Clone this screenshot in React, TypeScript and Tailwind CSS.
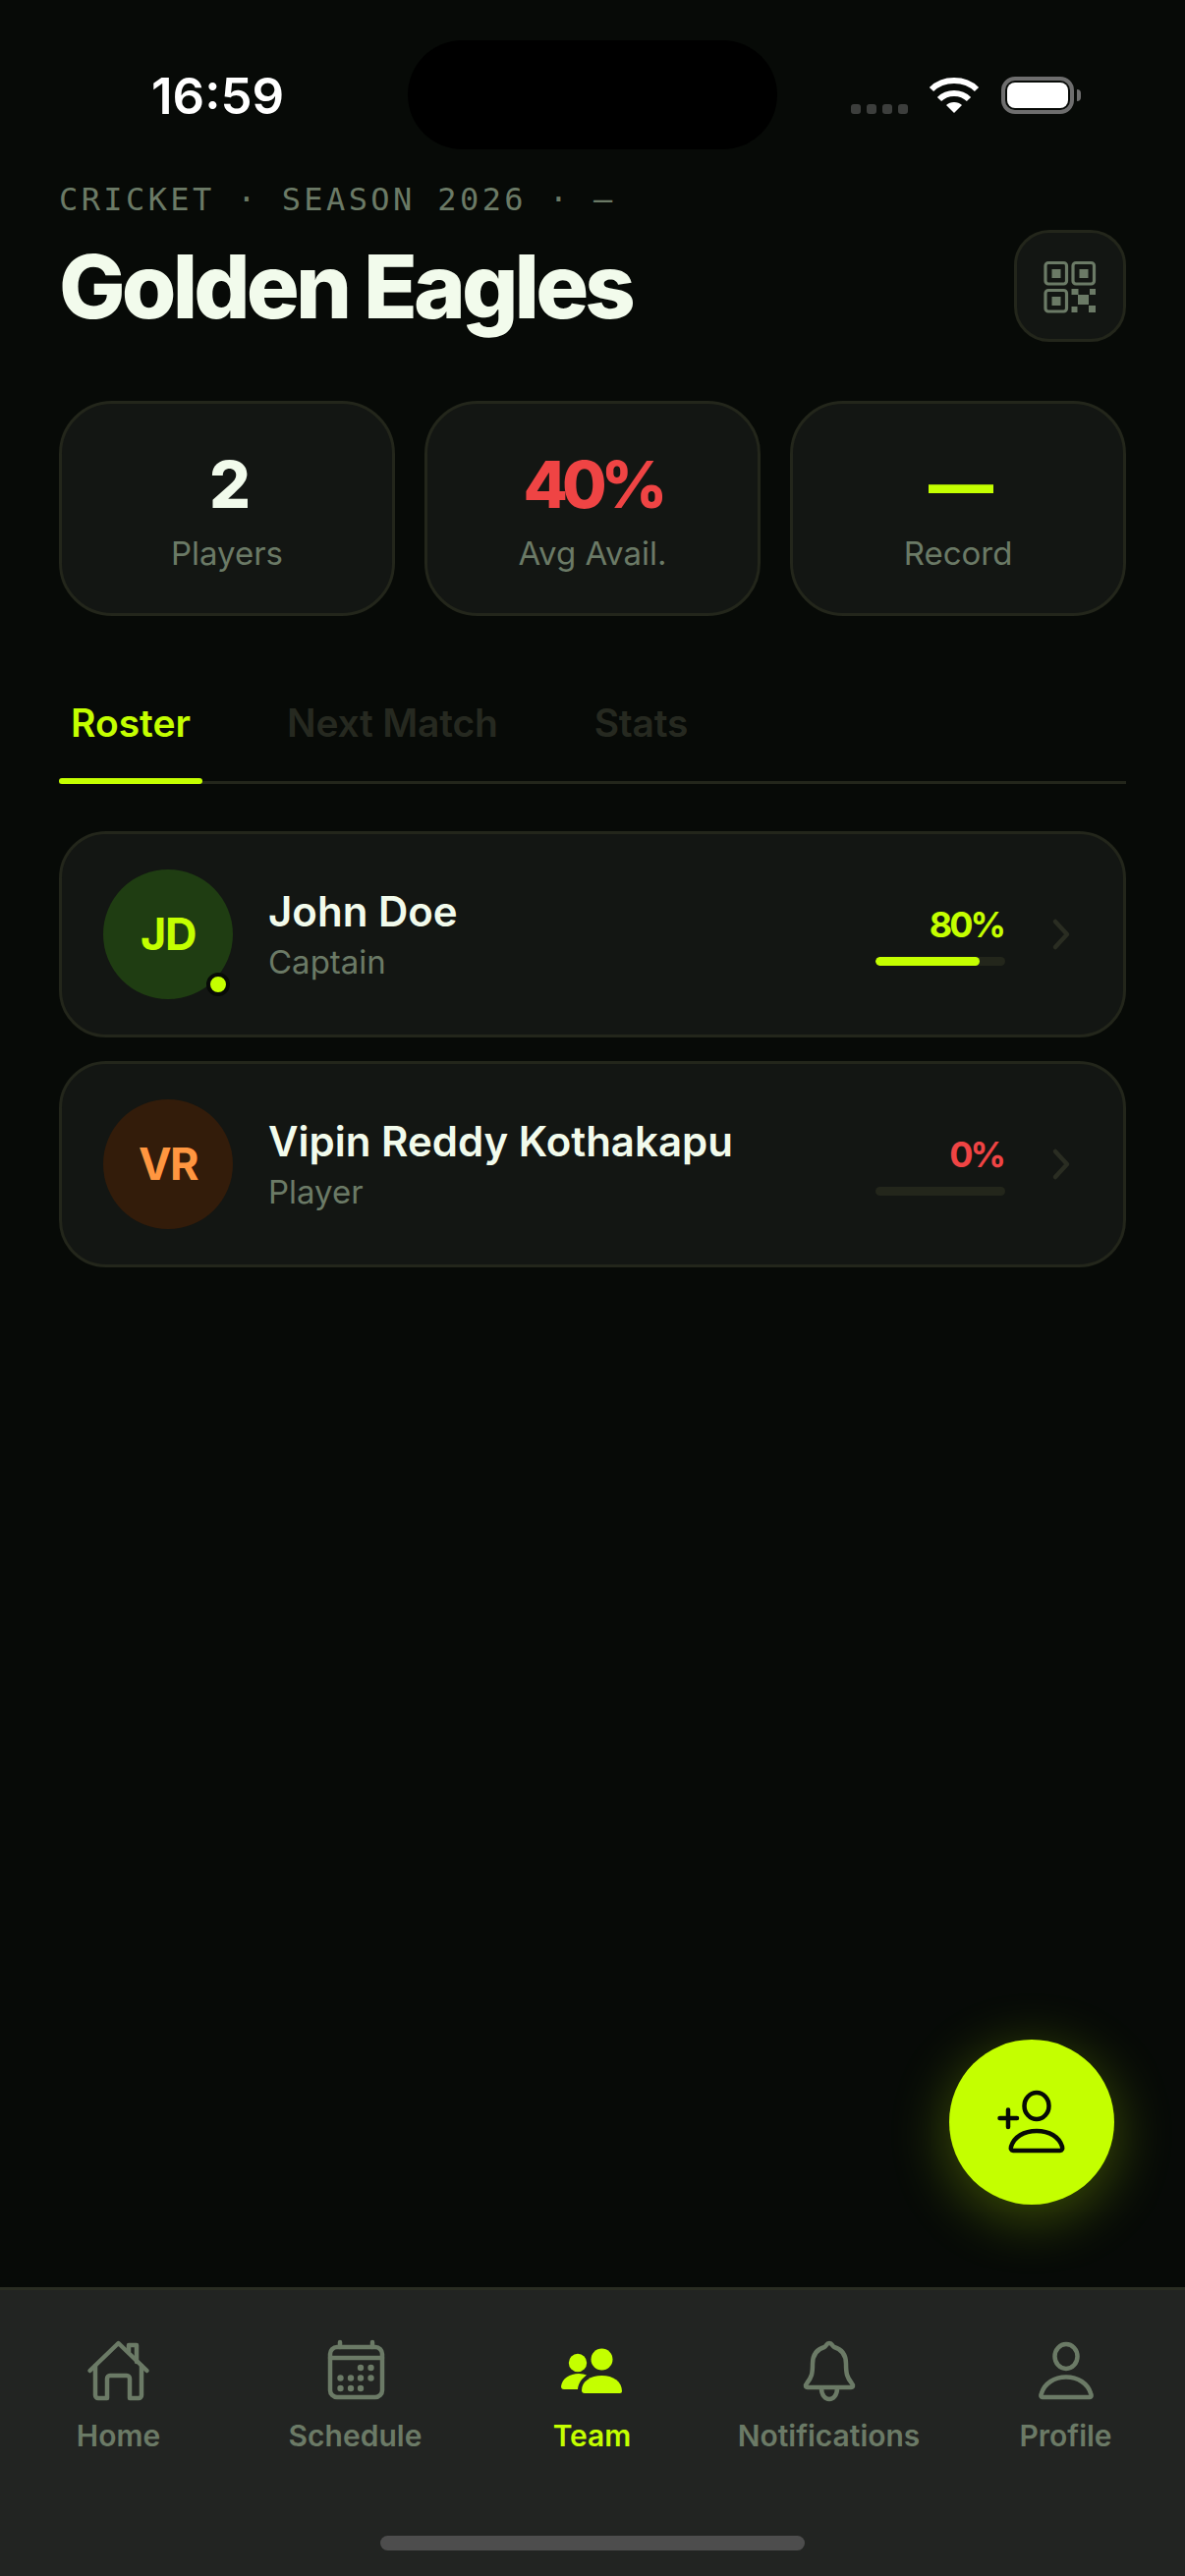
import React from "react";

const LIME = "#c4ff00";

function Stat({ value, label, color }: { value: string; label: string; color: string }) {
  return (
    <div className="flex h-[219px] flex-1 flex-col items-center rounded-[54px] border-[3px] border-[#23261b] bg-[#131613] pt-[42px]">
      <div className="text-[66px] leading-[80px] font-extrabold tracking-[-6px]" style={{ color }}>{value}</div>
      <div className="mt-[8px] text-[33px] leading-[44px] font-normal text-[#6b7a66]">{label}</div>
    </div>
  );
}

function Chevron() {
  return (
    <svg width="24" height="36" viewBox="0 0 24 36" fill="none" className="ml-[45px] shrink-0">
      <path d="M6 5 L18 18 L6 31" stroke="#2a2d22" strokeWidth="4.5" strokeLinecap="round" strokeLinejoin="round" />
    </svg>
  );
}

function Player({ initials, name, role, pct, pctColor, avBg, avFg, dot }: { initials: string; name: string; role: string; pct: number; pctColor: string; avBg: string; avFg: string; dot?: boolean }) {
  return (
    <div className="flex h-[210px] items-center rounded-[48px] border-[3px] border-[#23261b] bg-[#131613] pr-[51px] pl-[42px]">
      <div className="relative flex h-[132px] w-[132px] shrink-0 items-center justify-center rounded-full text-[45px] font-bold tracking-[-1.5px]" style={{ background: avBg, color: avFg }}>
        {initials}
        {dot && <span className="absolute right-[3px] bottom-[3px] h-[24px] w-[24px] rounded-full border-[4px] border-[#070a07] bg-[#c4ff00]" />}
      </div>
      <div className="ml-[36px] flex min-w-0 flex-1 flex-col">
        <div className="text-[42px] leading-[52px] font-semibold text-[#f2fbec]">{name}</div>
        <div className="mt-[3px] text-[33px] leading-[44px] text-[#6b7a66]">{role}</div>
      </div>
      <div className="flex w-[132px] shrink-0 flex-col items-end">
        <div className="pr-[2px] text-[36px] leading-[44px] font-bold tracking-[-3px]" style={{ color: pctColor }}>{pct}%</div>
        <div className="mt-[11px] h-[9px] w-full overflow-hidden rounded-full bg-[#23261b]">
          <div className="h-full rounded-full bg-[#c4ff00]" style={{ width: `${pct}%` }} />
        </div>
      </div>
      <Chevron />
    </div>
  );
}

const G = "#6b7a66";

function HomeIcon() {
  return (
    <svg width="66" height="66" viewBox="0 0 66 66" fill="none" stroke={G} strokeWidth="4.5" strokeLinecap="round" strokeLinejoin="round">
      <path d="M3.5 33 L32.5 5 L61.5 33" />
      <path d="M9 28 V58 a3 3 0 0 0 3 3 H21 V41 a3 3 0 0 1 3 -3 H41 a3 3 0 0 1 3 3 V61 H53 a3 3 0 0 0 3 -3 V28" />
      <path d="M43 14 V7 H51 V24" />
    </svg>
  );
}

function ScheduleIcon() {
  const dots: [number, number][] = [[38, 30], [48.5, 30], [17.5, 40.5], [28, 40.5], [38, 40.5], [48.5, 40.5], [17.5, 51], [28, 51], [38, 51]];
  return (
    <svg width="66" height="66" viewBox="0 0 66 66" fill="none" stroke={G} strokeWidth="4.5" strokeLinecap="round">
      <rect x="7" y="9" width="53" height="51" rx="7" />
      <path d="M7 20 H60" />
      <path d="M17 4 V9 M50 4 V9" />
      {dots.map(([x, y]) => (
        <circle key={`${x}-${y}`} cx={x} cy={y} r="3.2" fill={G} stroke="none" />
      ))}
    </svg>
  );
}

function TeamIcon() {
  return (
    <svg width="66" height="66" viewBox="0 0 66 66" fill={LIME}>
      <circle cx="42.5" cy="21.5" r="11" />
      <circle cx="18" cy="25" r="9.2" />
      <path d="M22 53 C22 44 31 38 42.5 38 C54 38 63 44 63 54 Q63 56 61 56 H25 Q22 56 22 53 Z" />
      <path d="M1 49 C2 41 10 36 19 36 Q24 36 27 37.5 C22 41 18.5 46 18 52 H4 Q1 52 1 49 Z" />
    </svg>
  );
}

function BellIcon() {
  return (
    <svg width="66" height="66" viewBox="0 0 66 66" fill="none" stroke={G} strokeWidth="4.5" strokeLinecap="round" strokeLinejoin="round">
      <path d="M33 5 C36 5 36 8 38 9 C45 11 50 16 50 26 C50 36 51 40 56 46 C58 48 57 50 55 50 H11 C9 50 8 48 10 46 C15 40 16 36 16 26 C16 16 21 11 28 9 C30 8 30 5 33 5 Z" />
      <path d="M25 51 C25 58 29 62 33 62 C37 62 41 58 41 51" />
    </svg>
  );
}

function ProfileIcon() {
  return (
    <svg width="66" height="66" viewBox="0 0 66 66" fill="none" stroke={G} strokeWidth="4.5" strokeLinecap="round" strokeLinejoin="round">
      <ellipse cx="33" cy="18.5" rx="11.5" ry="12.5" />
      <path d="M9 60 C7 60 7 58 8 56 C11 46 21 39.5 33 39.5 C45 39.5 55 46 58 56 C59 58 59 60 57 60 Z" />
    </svg>
  );
}

function NavItem({ label, icon, active }: { label: string; icon: React.ReactNode; active?: boolean }) {
  return (
    <div className="flex flex-col items-center">
      {icon}
      <div className="mt-[15px] text-[30px] leading-[36px] font-semibold whitespace-nowrap" style={{ color: active ? LIME : G }}>{label}</div>
    </div>
  );
}

export default function App() {
  return (
    <div className="relative flex h-[2622px] w-[1206px] flex-col overflow-hidden bg-[#070a07]" style={{ fontFamily: "Inter, 'Noto Sans', sans-serif" }}>
      {/* dynamic island */}
      <div className="absolute top-[41px] left-[415px] h-[111px] w-[376px] rounded-full bg-black" />

      {/* status bar */}
      <div className="flex h-[182px] shrink-0 items-start justify-between pt-[68px] pr-[106px] pl-[154px]">
        <div className="text-[51px] leading-[60px] font-semibold text-white">16:59</div>
        <div className="flex items-start pt-[10px]">
          <div className="mt-[28px] flex gap-[6px]">
            <span className="h-[10px] w-[10px] rounded-[3px] bg-[#3c3e3c]" />
            <span className="h-[10px] w-[10px] rounded-[3px] bg-[#3c3e3c]" />
            <span className="h-[10px] w-[10px] rounded-[3px] bg-[#3c3e3c]" />
            <span className="h-[10px] w-[10px] rounded-[3px] bg-[#3c3e3c]" />
          </div>
          <svg width="52" height="38" viewBox="0 0 52 38" fill="none" className="ml-[21px]">
            <path d="M3 13 C15 1 37 1 49 13" stroke="#fff" strokeWidth="6" />
            <path d="M11 23 C19 15 33 15 41 23" stroke="#fff" strokeWidth="6" />
            <path d="M18 29 C22 25 30 25 34 29 L26 37 Z" fill="#fff" />
          </svg>
          <div className="ml-[22px] flex items-center">
            <div className="h-[38px] w-[74px] rounded-[14px] border-[4px] border-[#6e6e6e] p-[2px]">
              <div className="h-full w-full rounded-[8px] bg-white" />
            </div>
            <span className="ml-[3px] h-[12px] w-[4px] rounded-r-full bg-[#6e6e6e]" />
          </div>
        </div>
      </div>

      {/* header */}
      <div className="shrink-0 px-[60px]">
        <div className="text-[32px] leading-[42px] tracking-[3.4px] text-[#6b7a66]" style={{ fontFamily: "'DejaVu Sans Mono', monospace" }}>CRICKET · SEASON 2026 · —</div>
        <div className="mt-[10px] flex items-center justify-between">
          <div className="pt-[2px] text-[90px] leading-[110px] font-extrabold tracking-[-3.9px] text-[#f2fbec]">Golden Eagles</div>
          <div className="flex h-[114px] w-[114px] items-center justify-center rounded-[36px] border-[3px] border-[#23261b] bg-[#131613]">
            <svg width="66" height="66" viewBox="0 0 66 66" fill={G}>
              <rect x="8" y="9.5" width="21.5" height="21.5" rx="3" fill="none" stroke={G} strokeWidth="3.2" />
              <rect x="36" y="9.5" width="21.5" height="21.5" rx="3" fill="none" stroke={G} strokeWidth="3.2" />
              <rect x="8" y="37.5" width="21.5" height="21.5" rx="3" fill="none" stroke={G} strokeWidth="3.2" />
              <rect x="14.5" y="16" width="9" height="9" />
              <rect x="42.5" y="16" width="9" height="9" />
              <rect x="14.5" y="44" width="9" height="9" />
              <rect x="34.5" y="36" width="7" height="6" />
              <rect x="53" y="36" width="6" height="6" />
              <rect x="41" y="42" width="11" height="10" />
              <rect x="34.5" y="54" width="6" height="6" />
              <rect x="52" y="53" width="7" height="7" />
            </svg>
          </div>
        </div>
      </div>

      {/* stats */}
      <div className="mt-[60px] flex shrink-0 gap-[30px] px-[60px]">
        <Stat value="2" label="Players" color="#f2fbec" />
        <Stat value="40%" label="Avg Avail." color="#ef4444" />
        <Stat value="—" label="Record" color={LIME} />
      </div>

      {/* tabs */}
      <div className="mx-[60px] mt-[69px] flex h-[102px] shrink-0 gap-[74px] border-b-[3px] border-[#23261b]">
        <div className="relative px-[12px] pt-[16px] text-[39px] leading-[48px] font-semibold text-[#c4ff00]">
          Roster
          <span className="absolute right-0 -bottom-[3px] left-0 h-[6px] rounded-full bg-[#c4ff00]" />
        </div>
        <div className="px-[12px] pt-[16px] text-[39px] leading-[48px] font-semibold tracking-[-0.2px] text-[#262920]">Next Match</div>
        <div className="px-[12px] pt-[16px] text-[39px] leading-[48px] font-semibold tracking-[-0.2px] text-[#262920]">Stats</div>
      </div>

      {/* roster */}
      <div className="mt-[48px] flex shrink-0 flex-col gap-[24px] px-[60px]">
        <Player initials="JD" name="John Doe" role="Captain" pct={80} pctColor={LIME} avBg="#1f3d12" avFg={LIME} dot />
        <Player initials="VR" name="Vipin Reddy Kothakapu" role="Player" pct={0} pctColor="#ef4444" avBg="#331c0a" avFg="#ff9640" />
      </div>

      <div className="flex-1" />

      {/* FAB */}
      <div className="absolute top-[2076px] left-[966px] flex h-[168px] w-[168px] items-center justify-center rounded-full bg-[#c4ff00] shadow-[0_12px_60px_rgba(196,255,0,0.3)]">
        <svg width="84" height="84" viewBox="0 0 84 84" fill="none" stroke="#070a07" strokeWidth="4.5" strokeLinecap="round" strokeLinejoin="round">
          <ellipse cx="47" cy="25.5" rx="12.5" ry="13.5" />
          <path d="M23 71 C21 71 20.5 69 21 67 C24 57 34 51 47 51 C60 51 70 57 73 67 C73.5 69 73 71 71 71 Z" />
          <path d="M18 29.5 V47 M9.5 38 H27" />
        </svg>
      </div>

      {/* nav */}
      <div className="h-[294px] shrink-0 border-t-[3px] border-[#2a2d22] bg-[#222422] pt-[49px]">
        <div className="grid grid-cols-5 pr-[1px]">
          <NavItem label="Home" icon={<HomeIcon />} />
          <NavItem label="Schedule" icon={<ScheduleIcon />} />
          <NavItem label="Team" icon={<TeamIcon />} active />
          <NavItem label="Notifications" icon={<BellIcon />} />
          <NavItem label="Profile" icon={<ProfileIcon />} />
        </div>
        <div className="mx-auto mt-[84px] h-[15px] w-[432px] rounded-full bg-[#4d4d4d]" />
      </div>
    </div>
  );
}
